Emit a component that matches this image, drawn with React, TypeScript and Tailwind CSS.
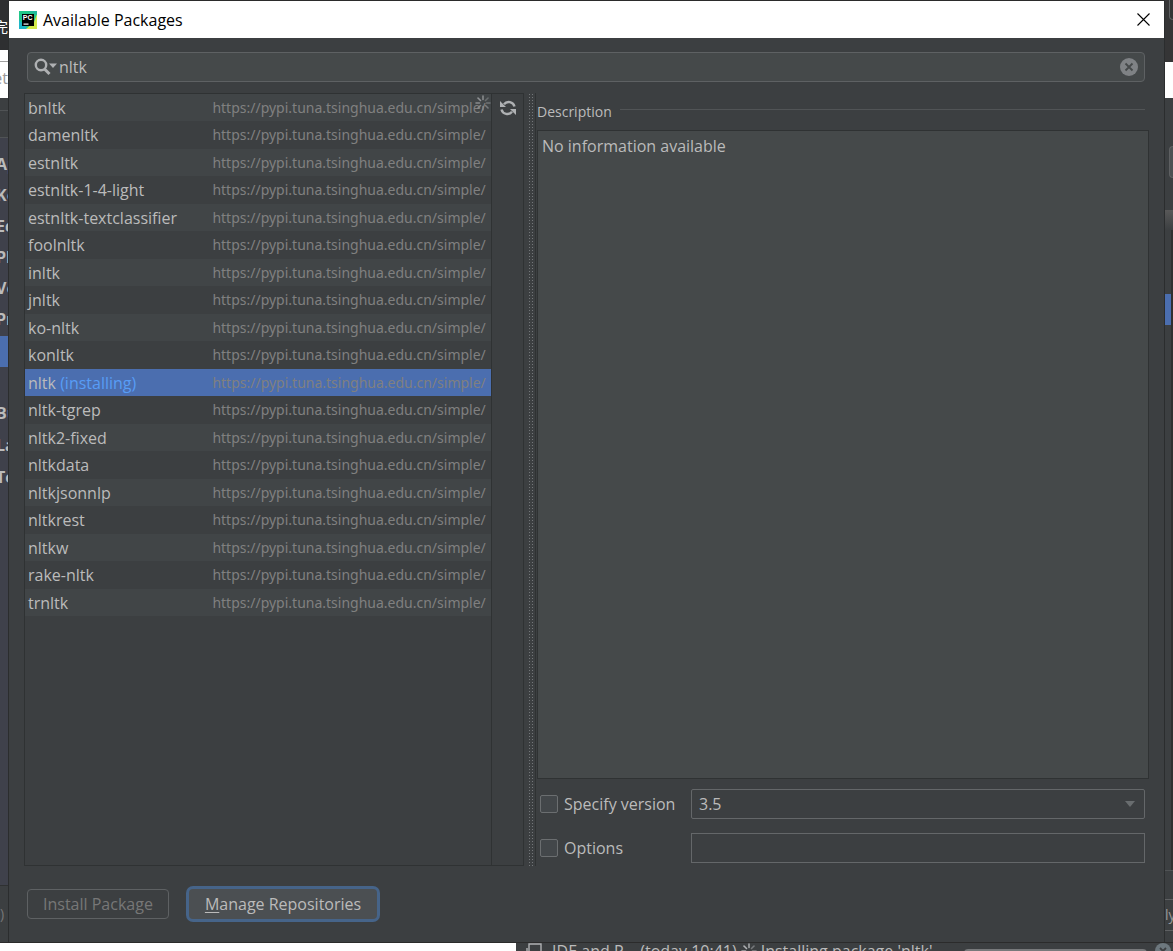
import { useState } from 'react';

const REPO = 'https://pypi.tuna.tsinghua.edu.cn/simple/';

interface Package {
    name: string;
    installing?: boolean;
}

const packages: Package[] = [
    { name: 'bnltk' },
    { name: 'damenltk' },
    { name: 'estnltk' },
    { name: 'estnltk-1-4-light' },
    { name: 'estnltk-textclassifier' },
    { name: 'foolnltk' },
    { name: 'inltk' },
    { name: 'jnltk' },
    { name: 'ko-nltk' },
    { name: 'konltk' },
    { name: 'nltk', installing: true },
    { name: 'nltk-tgrep' },
    { name: 'nltk2-fixed' },
    { name: 'nltkdata' },
    { name: 'nltkjsonnlp' },
    { name: 'nltkrest' },
    { name: 'nltkw' },
    { name: 'rake-nltk' },
    { name: 'trnltk' },
];

const settingsTop = ['Ap', 'Ke', 'Ed', 'Pl', 'Ve', 'Pr'];
const settingsBottom = ['Bu', 'La', 'To'];

function Spinner({ className }: { className: string }) {
    return (
        <svg viewBox="0 0 16 16" className={className} fill="none" stroke="currentColor" strokeWidth="1.6" strokeLinecap="round" aria-hidden="true">
            <path d="M8 1v3.5" opacity="0.9" />
            <path d="M13 3l-2.5 2.5" opacity="0.5" />
            <path d="M15 8h-3.5" opacity="0.6" />
            <path d="M13 13l-2.5-2.5" opacity="0.7" />
            <path d="M8 15v-3.5" opacity="0.7" />
            <path d="M3 13l2.5-2.5" opacity="0.8" />
            <path d="M1 8h3.5" opacity="0.9" />
            <path d="M3 3l2.5 2.5" />
        </svg>
    );
}

function PyCharmLogo() {
    return (
        <svg viewBox="0 0 18 18" className="h-[18px] w-[18px]" aria-hidden="true">
            <path d="M0 0h18v18H0z" fill="#21c78a" />
            <path d="M0 9v9h9z" fill="#1fb6c8" />
            <path d="M18 3v15H7l8-7z" fill="#d3e84a" />
            <path d="M9 0h9v4z" fill="#21b89a" />
            <path d="M3 3h12v12H3z" fill="#000" />
            <text x="3.8" y="9.4" fontSize="7" fontWeight="700" fontFamily="Liberation Sans, sans-serif" fill="#fff">PC</text>
            <path d="M4.5 12.500h5v1.200h-5z" fill="#fff" />
        </svg>
    );
}

/* Sliver of the settings window left of the dialog */
function LeftEdge() {
    return (
        <div className="flex w-[9px] shrink-0 flex-col overflow-hidden border-r border-[#2b2d2e] bg-[#3c3f41] whitespace-nowrap" aria-hidden="true">
            <div className="flex h-[50px] shrink-0 items-center justify-end bg-[#2e2f31] pt-1 text-sm text-white">完</div>
            <div className="h-12 shrink-0 bg-white">
                <div className="h-3 border-b border-[#a0a0a0]" />
                <div className="flex justify-end pt-1 text-base text-[#999]">et</div>
            </div>
            <div className="h-10 shrink-0 border-b border-[#505355] pt-3">
                <div className="border-t border-[#505355]" />
            </div>
            <div className="grow bg-[#3f414b] pt-[10px] text-base font-bold text-[#bbb]">
                {settingsTop.map(s => (
                    <div key={s} className="-ml-1 flex h-[31px] items-center">{s}</div>
                ))}
                <div className="mt-[2px] mb-[30px] h-[31px] bg-[#4b6eaf]" />
                {settingsBottom.map(s => (
                    <div key={s} className="-ml-1 flex h-8 items-center">{s}</div>
                ))}
            </div>
            <div className="flex h-[57px] shrink-0 items-center border-t border-[#2f3132] text-sm text-[#777]">)</div>
        </div>
    );
}

/* Sliver of the settings window right of the dialog */
function RightEdge() {
    return (
        <div className="flex w-[9px] shrink-0 flex-col overflow-hidden border-l border-[#2b2d2e] bg-[#3c3f41]" aria-hidden="true">
            <div className="h-[62px] shrink-0 bg-[#353536]">
                <div className="ml-1 h-5 rounded-bl border-b border-l border-[#5e6062]" />
            </div>
            <div className="h-9 shrink-0 bg-white" />
            <div className="h-28 shrink-0 pt-12">
                <div className="ml-1 h-8 rounded-l border border-r-0 border-[#5e6062] bg-[#4c5052]" />
            </div>
            <div className="h-5 shrink-0 bg-gradient-to-b from-[#585858] to-[#3c3f41]" />
            <div className="grow border-r-2 border-[#303030] pt-16">
                <div className="h-[31px] bg-[#4b6eaf]" />
            </div>
            <div className="h-[72px] shrink-0 border-t border-[#505355] pt-7">
                <div className="flex h-8 items-center border-y border-[#5e6062] text-sm text-[#999]">ly</div>
            </div>
        </div>
    );
}

export default function App() {
    const [query, setQuery] = useState('nltk');
    const [selected, setSelected] = useState('nltk');

    return (
        <div className="flex h-screen flex-col overflow-hidden bg-[#2b2b2b] font-['Open_Sans','Noto_Sans_CJK_SC',sans-serif] text-base text-[#bbb]">
            <div className="flex min-h-0 grow">
                <LeftEdge />

                <main className="flex min-w-0 grow flex-col border-t border-[#2b2b2b] bg-[#3c3f41]">
                    <header className="flex h-[37px] shrink-0 items-center bg-white px-[10px] text-black">
                        <PyCharmLogo />
                        <h1 className="ml-[6px] grow">Available Packages</h1>
                        <button aria-label="Close" className="p-1">
                            <svg viewBox="0 0 13 13" className="h-[13px] w-[13px]" fill="none" stroke="currentColor" strokeWidth="1.1">
                                <path d="M.5.5l12 12M12.500.5l-12 12" />
                            </svg>
                        </button>
                    </header>

                    <div className="flex min-h-0 grow flex-col px-[15px] pt-[14px]">
                        <div className="mr-1 ml-[3px] flex h-[30px] shrink-0 items-center rounded border border-[#5e6163] bg-[#45494a] px-[6px]">
                            <svg viewBox="0 0 24 18" className="h-[18px] w-6 shrink-0 text-[#afb1b3]" aria-hidden="true">
                                <circle cx="7" cy="7" r="5.2" fill="none" stroke="currentColor" strokeWidth="2.4" />
                                <path d="M10.500 11l5 5" stroke="currentColor" strokeWidth="3" />
                                <path d="M15 5.500h8l-4 4.500z" fill="currentColor" />
                            </svg>
                            <input
                                aria-label="Search packages"
                                value={query}
                                onChange={e => setQuery(e.target.value)}
                                className="min-w-0 grow bg-transparent pl-px outline-none"
                            />
                            <button aria-label="Clear search" onClick={() => setQuery('')}>
                                <svg viewBox="0 0 18 18" className="h-[18px] w-[18px]">
                                    <circle cx="9" cy="9" r="9" fill="#7f8285" />
                                    <path d="M5.500 5.500l7 7M12.500 5.500l-7 7" stroke="#45494a" strokeWidth="1.8" />
                                </svg>
                            </button>
                        </div>

                        <div className="mt-[11px] grid min-h-0 grow grid-cols-[4fr_5fr]">
                            {/* Package list */}
                            <section className="flex min-w-0 border border-[#2f3233]">
                                <div className="relative min-w-0 grow overflow-hidden border-r border-[#2f3233]">
                                    <table className="w-full table-fixed border-collapse whitespace-nowrap">
                                        <tbody>
                                            {packages.map((pkg, i) => {
                                                const active = pkg.name === selected;
                                                const stripe = i % 2 === 0 ? 'h-[27px] bg-[#414547]' : 'h-7';
                                                return (
                                                    <tr
                                                        key={pkg.name}
                                                        onClick={() => setSelected(pkg.name)}
                                                        className={active ? 'h-[27px] bg-[#4b6eaf]' : stripe}
                                                    >
                                                        <td className="w-[40%] p-0 pl-[3px]">
                                                            {pkg.name}
                                                            {pkg.installing && <span className="text-[#589df6]"> (installing)</span>}
                                                        </td>
                                                        <td className="p-0 pl-px font-['Noto_Sans',sans-serif] text-sm text-[#808080]">{REPO}</td>
                                                    </tr>
                                                );
                                            })}
                                        </tbody>
                                    </table>
                                    <Spinner className="absolute top-px right-0 h-4 w-4 text-[#909395]" />
                                </div>
                                <div className="w-[31px] shrink-0 pt-1 text-center">
                                    <button aria-label="Reload list of packages">
                                        <svg viewBox="0 0 16 16" className="h-4 w-4 text-[#afb1b3]" fill="none" stroke="currentColor" strokeWidth="2.4">
                                            <path d="M14.500 6.500A6 6 0 0 0 4 4.200M1.500 9.500a6 6 0 0 0 10.500 2.300" />
                                            <path d="M0 1v6h6zM16 15V9h-6z" fill="currentColor" stroke="none" />
                                        </svg>
                                    </button>
                                </div>
                            </section>

                            {/* Package details */}
                            <section className="flex min-w-0">
                                <div className="mr-px ml-1 w-2 shrink-0 border-r border-[#2f3233] bg-[radial-gradient(#74777a_30%,transparent_35%)] bg-[size:3px_3px]" />
                                <div className="flex min-w-0 grow flex-col">
                                    <div className="flex h-[37px] shrink-0 items-center gap-2 pr-1 text-sm">
                                        <h2>Description</h2>
                                        <div className="mb-1 h-px grow bg-[#515456]" />
                                    </div>
                                    <div className="grow border border-[#2f3233] bg-[#45494a] px-1 py-[3px]">No information available</div>
                                    <div className="mt-[10px] mr-1 mb-[3px] grid grid-cols-[147px_1fr] items-center gap-x-1 gap-y-[14px] pl-[3px]">
                                        <label className="flex items-center gap-[6px]">
                                            <input type="checkbox" className="h-[18px] w-[18px] appearance-none rounded-xs border border-[#6b6e70] bg-[#43474a]" />
                                            Specify version
                                        </label>
                                        <div className="relative">
                                            <select aria-label="Version" className="h-[30px] w-full appearance-none rounded-xs border border-[#646769] px-[7px]">
                                                <option>3.5</option>
                                            </select>
                                            <svg viewBox="0 0 10 6" className="pointer-events-none absolute top-3 right-[10px] h-[6px] w-[10px] text-[#696d6f]">
                                                <path d="M0 0h10L5 6z" fill="currentColor" />
                                            </svg>
                                        </div>
                                        <label className="flex items-center gap-[6px]">
                                            <input type="checkbox" className="h-[18px] w-[18px] appearance-none rounded-xs border border-[#6b6e70] bg-[#43474a]" />
                                            Options
                                        </label>
                                        <input aria-label="Install options" className="h-[30px] w-full border border-[#646769] px-[7px] outline-none" />
                                    </div>
                                </div>
                            </section>
                        </div>

                        <footer className="flex h-[76px] shrink-0 items-center gap-5 px-[3px]">
                            <button disabled className="h-[30px] rounded border border-[#5e6163] px-[15px] text-[#777]">Install Package</button>
                            <button className="h-[30px] rounded-sm bg-[#4b4f52] px-4 ring-3 ring-[#466489]">
                                <span className="underline underline-offset-2">M</span>anage Repositories
                            </button>
                        </footer>
                    </div>
                </main>

                <RightEdge />
            </div>

            {/* Status bar peeking out below the dialog */}
            <div className="flex h-[9px] shrink-0 overflow-hidden border-t border-[#2b2b2b] bg-[#3c3f41] whitespace-nowrap">
                <div className="w-[44%] shrink-0 bg-white" />
                <svg viewBox="0 0 16 16" className="ml-[10px] h-4 w-4 shrink-0 text-[#afb1b3]" fill="none" stroke="currentColor" strokeWidth="1.4" aria-hidden="true">
                    <path d="M3 1h12v11H3zM1 5v10h11" />
                </svg>
                <span className="ml-[10px] leading-4">IDE and P... (today 10:41)</span>
                <Spinner className="ml-1 h-4 w-4 shrink-0 text-[#afb1b3]" />
                <span className="ml-1 leading-4">Installing package 'nltk'</span>
                <div className="mt-[6px] ml-8 h-1 grow rounded-t bg-[#77797b]" />
                <svg viewBox="0 0 16 16" className="mr-[2px] ml-2 h-4 w-4 shrink-0" aria-hidden="true">
                    <circle cx="8" cy="8" r="8" fill="#6d787e" />
                    <path d="M5 5l6 6M11 5l-6 6" stroke="#3c3f41" strokeWidth="1.8" />
                </svg>
            </div>
        </div>
    );
}
